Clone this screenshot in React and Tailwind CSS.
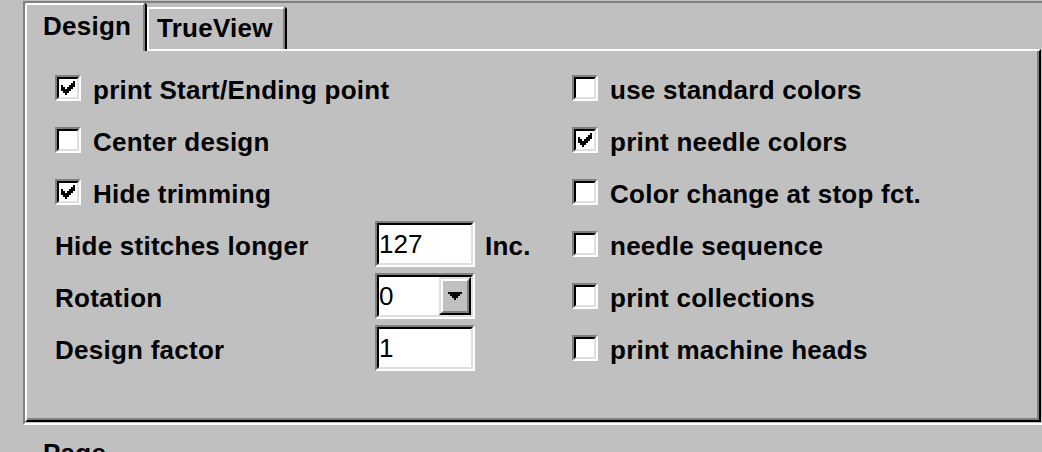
import React from "react";

function CheckMark() {
  // Win95 7x7 check glyph at 2x
  const rows = [
    [[6, 6]],
    [[5, 6]],
    [[0, 0], [4, 6]],
    [[0, 1], [3, 5]],
    [[0, 4]],
    [[1, 3]],
    [[2, 2]],
  ];
  return (
    <svg width="14" height="14" viewBox="0 0 14 14" shapeRendering="crispEdges" className="block">
      {rows.map((runs, r) =>
        runs.map(([a, b], i) => (
          <rect key={r + "-" + i} x={a * 2} y={r * 2} width={(b - a + 1) * 2} height="2" fill="#000" />
        ))
      )}
    </svg>
  );
}

function DownArrow() {
  const rows = [
    [0, 6],
    [1, 5],
    [2, 4],
    [3, 3],
  ];
  return (
    <svg width="14" height="8" viewBox="0 0 14 8" shapeRendering="crispEdges" className="block">
      {rows.map(([a, b], r) => (
        <rect key={r} x={a * 2} y={r * 2} width={(b - a + 1) * 2} height="2" fill="#000" />
      ))}
    </svg>
  );
}

function Checkbox({ checked }) {
  return (
    <div className="w-[26px] h-[26px] shrink-0 border-2 border-t-[#808080] border-l-[#808080] border-r-white border-b-white">
      <div className="w-full h-full border-2 border-t-black border-l-black border-r-[#dfdfdf] border-b-[#dfdfdf] bg-white flex items-center justify-center">
        {checked && <CheckMark />}
      </div>
    </div>
  );
}

function Sunken({ children }) {
  return (
    <div className="w-[100px] h-[46px] shrink-0 border-2 border-t-[#808080] border-l-[#808080] border-r-white border-b-white">
      <div className="w-full h-full border-2 border-t-black border-l-black border-r-[#dfdfdf] border-b-[#dfdfdf] bg-white flex items-stretch">
        {children}
      </div>
    </div>
  );
}

function CheckRow({ checked, label }) {
  return (
    <div className="h-[52px] flex items-center gap-[12px]">
      <Checkbox checked={checked} />
      <span className="pt-[4px]">{label}</span>
    </div>
  );
}

function FieldText({ children }) {
  return (
    <span className="flex-1 flex items-center font-normal tracking-normal text-black leading-[30px]">{children}</span>
  );
}

export default function App() {
  return (
    <div className="w-[1042px] h-[452px] overflow-hidden bg-[#c0c0c0] text-black font-bold text-[26px] leading-[30px] tracking-[0.25px] font-[family-name:Liberation_Sans,Arial,sans-serif]">
      {/* outer sunken frame */}
      <div className="ml-[23px] mt-[1px] w-[1030px] border-t-2 border-l-2 border-b-2 border-t-[#808080] border-l-[#808080] border-b-white pb-[1px]">
        {/* tab strip */}
        <div className="h-[46px] flex items-end">
          <div className="relative z-10 w-[122px] h-[48px] -mb-[2px] bg-[#c0c0c0] border-r-2 border-black rounded-tr-[3px]">
            <div className="h-full border-l-2 border-t-2 border-r-2 border-l-white border-t-white border-r-[#808080] rounded-tl-[3px] rounded-tr-[2px] pl-[16px] pt-[6px]">
              Design
            </div>
          </div>
          <div className="w-[140px] h-[42px] bg-[#c0c0c0] border-r-2 border-black rounded-tr-[3px]">
            <div className="h-full border-l-2 border-t-2 border-r-2 border-l-white border-t-white border-r-[#808080] rounded-tr-[2px] pl-[8px] pt-[4px]">
              TrueView
            </div>
          </div>
        </div>
        {/* tab panel */}
        <div className="w-[1016px] h-[373px] border-t-2 border-l-2 border-r-2 border-b-2 border-t-white border-l-white border-r-black border-b-black">
          <div className="h-full border-r-2 border-b-2 border-r-[#808080] border-b-[#808080] pl-[28px] pt-[11px] flex">
            <div className="w-[517px] flex flex-col">
              <CheckRow checked label="print Start/Ending point" />
              <CheckRow label="Center design" />
              <CheckRow checked label="Hide trimming" />
              <div className="h-[52px] flex items-center">
                <span className="w-[320px] pt-[4px]">Hide stitches longer</span>
                <Sunken>
                  <FieldText>127</FieldText>
                </Sunken>
                <span className="ml-[10px] pt-[4px]">Inc.</span>
              </div>
              <div className="h-[52px] flex items-center">
                <span className="w-[320px] pt-[4px]">Rotation</span>
                <Sunken>
                  <FieldText>0</FieldText>
                  <div className="w-[32px] shrink-0 border-2 border-t-[#dfdfdf] border-l-[#dfdfdf] border-r-black border-b-black bg-[#c0c0c0]">
                    <div className="w-full h-full border-2 border-t-white border-l-white border-r-[#808080] border-b-[#808080] flex items-center justify-center">
                      <DownArrow />
                    </div>
                  </div>
                </Sunken>
              </div>
              <div className="h-[52px] flex items-center">
                <span className="w-[320px] pt-[4px]">Design factor</span>
                <Sunken>
                  <FieldText>1</FieldText>
                </Sunken>
              </div>
            </div>
            <div className="flex flex-col">
              <CheckRow label="use standard colors" />
              <CheckRow checked label="print needle colors" />
              <CheckRow label="Color change at stop fct." />
              <CheckRow label="needle sequence" />
              <CheckRow label="print collections" />
              <CheckRow label="print machine heads" />
            </div>
          </div>
        </div>
      </div>
      <div className="ml-[43px] mt-[13px]">Page</div>
    </div>
  );
}
